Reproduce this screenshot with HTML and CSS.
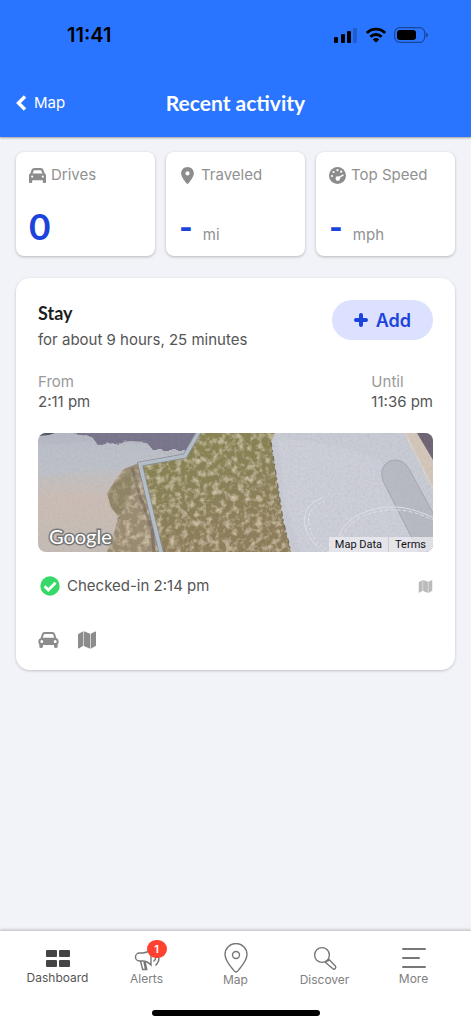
FILE: index.html
```html
<!DOCTYPE html>
<html lang="en">
<head>
    <meta charset="UTF-8">
    <meta name="viewport" content="width=device-width, initial-scale=1.0">
    <link rel="stylesheet" href="styles.css">
    <title>Recent activity</title>
</head>
<body>
    <svg class="defs" width="0" height="0" aria-hidden="true">
        <symbol id="icon-map" viewBox="0 0 20 20">
            <path d="M1 4.200 6.200 1.200v14.600l-4.400 2.600q-.8.3-.8-.6zM6.800 1.200l6.400 2.600v15l-6.400-2.800zM13.800 3.800l4.400-2.300q.8-.3.8.6v13.700l-5.200 3z"/>
        </symbol>
    </svg>

    <header class="header">
        <div class="status-bar">
            <span class="time">11:41</span>
            <div class="status-icons">
                <svg width="24" height="16" viewBox="0 0 24 16">
                    <rect x="0" y="10" width="4" height="6" rx="1"/>
                    <rect x="7" y="7" width="4" height="9" rx="1"/>
                    <rect x="13" y="4" width="4" height="12" rx="1"/>
                    <rect x="19" y="1" width="4" height="15" rx="1" opacity=".2"/>
                </svg>
                <svg width="22" height="16" viewBox="0 0 22 16">
                    <g fill="none" stroke="#000" stroke-width="2.8">
                        <path d="M1.800 6a13 13 0 0 1 18.400 0"/>
                        <path d="M5.400 9.800a8 8 0 0 1 11.200 0"/>
                    </g>
                    <path d="M11 15.600 7.800 12.400a4.600 4.600 0 0 1 6.400 0z"/>
                </svg>
                <svg width="34" height="16" viewBox="0 0 34 16">
                    <rect x=".7" y=".7" width="30" height="14.6" rx="5" fill="none" stroke="#000" stroke-width="1.2" opacity=".4"/>
                    <rect x="3" y="3" width="19" height="10" rx="3"/>
                    <path d="M32.200 5.500q1.600 1 1.600 2.500t-1.600 2.500z" opacity=".5"/>
                </svg>
            </div>
        </div>
        <div class="title-bar">
            <a class="back" href="#">
                <svg width="12" height="16" viewBox="0 0 12 16" fill="none" stroke="#fff" stroke-width="3.4"><path d="M10 1.500 3.500 8l6.500 6.500"/></svg>
                Map
            </a>
            <h1>Recent activity</h1>
        </div>
    </header>

    <main>
        <section class="stats">
            <div class="stat">
                <div class="stat-label">
                    <svg width="17" height="17" viewBox="0 0 512 512"><path d="M135.2 117.4L109.1 192H402.9l-26.1-74.6C372.3 104.6 360.2 96 346.6 96H165.4c-13.6 0-25.7 8.6-30.2 21.4zM39.6 196.8L74.8 96.3C88.3 57.8 124.6 32 165.4 32H346.6c40.8 0 77.1 25.8 90.6 64.3l35.2 100.5c23.2 9.6 39.6 32.5 39.6 59.2V400v48c0 17.7-14.3 32-32 32H448c-17.7 0-32-14.3-32-32V400H96v48c0 17.7-14.3 32-32 32H32c-17.7 0-32-14.3-32-32V400 256c0-26.7 16.4-49.6 39.6-59.2zM128 288a32 32 0 1 0 -64 0 32 32 0 1 0 64 0zm288 32a32 32 0 1 0 0-64 32 32 0 1 0 0 64z"/></svg>
                    Drives
                </div>
                <div class="stat-value"><strong>0</strong></div>
            </div>
            <div class="stat">
                <div class="stat-label">
                    <svg width="17" height="17" viewBox="0 0 512 512"><path transform="translate(64)" d="M215.7 499.2C267 435 384 279.4 384 192C384 86 298 0 192 0S0 86 0 192c0 87.4 117 243 168.3 307.2c12.3 15.3 35.1 15.3 47.4 0zM192 128a64 64 0 1 1 0 128 64 64 0 1 1 0-128z"/></svg>
                    Traveled
                </div>
                <div class="stat-value"><strong>-</strong><span>mi</span></div>
            </div>
            <div class="stat">
                <div class="stat-label">
                    <svg width="17" height="17" viewBox="0 0 17 17">
                        <circle cx="8.5" cy="8.5" r="8.5"/>
                        <g fill="#fff">
                            <circle cx="3" cy="9" r="1.1"/>
                            <circle cx="4.6" cy="5" r="1.1"/>
                            <circle cx="8.5" cy="3.2" r="1.1"/>
                            <circle cx="12.2" cy="4.7" r="1.1"/>
                            <circle cx="8.8" cy="11.6" r="2.3"/>
                        </g>
                        <path d="M8.800 11.200 14 8.200" stroke="#fff" stroke-width="1.5" stroke-linecap="round"/>
                    </svg>
                    Top Speed
                </div>
                <div class="stat-value"><strong>-</strong><span>mph</span></div>
            </div>
        </section>

        <section class="card">
            <div class="card-head">
                <div>
                    <h2>Stay</h2>
                    <p>for about 9 hours, 25 minutes</p>
                </div>
                <button type="button" class="add-button">
                    <svg width="14" height="14" viewBox="0 0 14 14" fill="none" stroke="#1c43dc" stroke-width="4" stroke-linecap="round"><path d="M7 2v10M2 7h10"/></svg>
                    Add
                </button>
            </div>

            <dl class="times">
                <div>
                    <dt>From</dt>
                    <dd>2:11 pm</dd>
                </div>
                <div>
                    <dt>Until</dt>
                    <dd>11:36 pm</dd>
                </div>
            </dl>

            <div class="map">
                <svg class="map-picture" viewBox="0 0 395 119" preserveAspectRatio="xMidYMid slice">
                    <defs>
                        <linearGradient id="lot" x1="0" y1="0" x2="0" y2="1">
                            <stop offset="0" stop-color="#b4b8c4"/>
                            <stop offset=".3" stop-color="#bfc0c4"/>
                            <stop offset=".55" stop-color="#cbbdb5"/>
                            <stop offset="1" stop-color="#c5bcb6"/>
                        </linearGradient>
                        <linearGradient id="grass" x1="0" y1="0" x2=".4" y2="1">
                            <stop offset="0" stop-color="#85834f"/>
                            <stop offset=".5" stop-color="#878052"/>
                            <stop offset="1" stop-color="#8d7c59"/>
                        </linearGradient>
                        <filter id="rough" x="0" y="0" width="1" height="1">
                            <feTurbulence type="fractalNoise" baseFrequency=".16" numOctaves="4" seed="4" result="n"/>
                            <feColorMatrix in="n" values="0 0 0 0 .76  0 0 0 0 .66  0 0 0 0 .48  1.800 0 0 0 -.8" result="spots"/>
                            <feComposite in="spots" in2="SourceGraphic" operator="in" result="s"/>
                            <feMerge><feMergeNode in="SourceGraphic"/><feMergeNode in="s"/></feMerge>
                        </filter>
                        <filter id="edge">
                            <feTurbulence type="fractalNoise" baseFrequency=".12" numOctaves="2" seed="2"/>
                            <feDisplacementMap in="SourceGraphic" scale="5"/>
                        </filter>
                        <filter id="grain" x="0" y="0" width="1" height="1">
                            <feTurbulence type="fractalNoise" baseFrequency=".4" numOctaves="2" seed="8"/>
                            <feColorMatrix values="0 0 0 0 .35  0 0 0 0 .33  0 0 0 0 .35  .4 0 0 0 -.16"/>
                        </filter>
                    </defs>
                    <rect width="395" height="119" fill="url(#lot)"/>
                    <path d="M0 12 55 8l55 4 20 12-45 12-40 2-45 8z" fill="#bcc2cc" opacity=".6"/>
                    <path filter="url(#edge)" d="M34-5h126l-12 22h-33l-7-8-16-1-32 4-6-8-18-3z" fill="#77738a"/>
                    <path d="M0 0h17l-6 2-11 1z" fill="#555363"/>
                    <g filter="url(#rough)">
                        <path d="M101 30 86 36 77 48l-8 12 4 14 7 9-3 14-8 22h55z" fill="#998970"/>
                        <path d="M160 0h77l-4 9 7 45 5 33 8 32H124L102 31l45-7z" fill="url(#grass)"/>
                    </g>
                    <path d="M88 38l-11 13-8 10 4 14 7 8 10-13 8-32z" fill="#7c794f" opacity=".4"/>
                    <path d="M94 35l8 28 12 34 2 22" fill="none" stroke="#5d5154" stroke-width="3" opacity=".4"/>
                    <path d="M237 0h158v119H253l-8-32-5-33-7-45z" fill="#c8cbd4"/>
                    <path d="M240 6q80 5 115 30l25 83H262l-15-50z" fill="#ced0da" opacity=".6"/>
                    <path d="m233 9 7 45 5 33 8 32" fill="none" stroke="#6d6952" stroke-width="1.2" stroke-dasharray="5 3 2 4"/>
                    <path d="M367 0h14l14 27v29z" fill="#d4c6b9"/>
                    <path d="M379 0h16v27z" fill="#6c6272"/>
                    <path d="m367 0 28 56" stroke="#d9d3d0" stroke-width="1.5"/>
                    <path d="m381 119-36-71c-7-20 17-29 26-12l30 55v28z" fill="#adb1ba" fill-opacity=".65" stroke="#a2a6b0"/>
                    <g fill="none" stroke="#e0e2e9">
                        <path d="M284 65c-14 4-19 16-17 27 3 14 11 21 22 29"/>
                        <path d="M287 68c-14 4-18 14-16 24 2 12 10 19 21 28" stroke-dasharray="3 2"/>
                        <path d="M301 104c4-16 23-28 49-30 18-1 33 5 46 11"/>
                        <path d="M304 105c4-15 22-26 46-28 17-1 31 3 45 10" stroke-dasharray="4 2"/>
                    </g>
                    <path d="M165-8 147 23 102 31l10 42 12 50" fill="none" stroke="#858a92" stroke-width="5"/>
                    <path d="M165-8 147 23 102 31l10 42 12 50" fill="none" stroke="#b5bfc9" stroke-width="3.5"/>
                    <rect width="395" height="119" filter="url(#grain)"/>
                </svg>
                <span class="map-logo">Google</span>
                <div class="map-links">
                    <a href="#">Map Data</a>
                    <a href="#">Terms</a>
                </div>
            </div>

            <div class="checkin">
                <svg width="20" height="20" viewBox="0 0 20 20">
                    <circle cx="10" cy="10" r="9.7" fill="#36d968"/>
                    <path d="m4.600 10.200 3.700 3.700 7.200-7.200" fill="none" stroke="#fff" stroke-width="2.8"/>
                </svg>
                <span>Checked-in 2:14 pm</span>
                <svg class="checkin-map" width="15" height="15"><use href="#icon-map"/></svg>
            </div>

            <div class="card-actions">
                <button type="button" aria-label="Drive">
                    <svg width="21" height="20" viewBox="0 0 21 20">
                        <path fill-rule="evenodd" d="M6.400 2h8.200q1.800 0 2.400 1.700L18.300 8q2.400.9 2.400 3.400 0 2-1 3.200v2q0 1.400-1.400 1.400h-.9q-1.400 0-1.400-1.400V15H5v1.600q0 1.400-1.400 1.400h-.9q-1.400 0-1.400-1.400v-2q-1-1.200-1-3.200Q.3 8.900 2.700 8L4 3.700Q4.600 2 6.400 2zm.4 1.900q-.7 0-1 .7L4.800 7.800h11.400l-1-3.200q-.3-.7-1-.7zM3.800 10a1.500 1.500 0 1 0 0 3 1.500 1.500 0 0 0 0-3zm13.400 0a1.500 1.500 0 1 0 0 3 1.500 1.500 0 0 0 0-3z"/>
                    </svg>
                </button>
                <button type="button" aria-label="Show on map">
                    <svg width="20" height="20"><use href="#icon-map"/></svg>
                </button>
            </div>
        </section>
    </main>

    <nav class="tabs">
        <a class="tab active" href="#">
            <svg width="30" height="28" viewBox="0 0 30 28">
                <rect x="3" y="7" width="11" height="7" rx="1"/>
                <rect x="16" y="7" width="11" height="7" rx="1"/>
                <rect x="3" y="17" width="11" height="7" rx="1"/>
                <rect x="16" y="17" width="11" height="7" rx="1"/>
            </svg>
            Dashboard
        </a>
        <a class="tab" href="#">
            <svg width="30" height="29" viewBox="0 0 30 29">
                <path d="M19 6.500q-4 3.500-8 3.500H7.500a3.500 3.500 0 0 0 0 8H11q4 0 8 4zM8.500 18l2.200 8.500h4L13 18.500M12 19l1.600 7.500M21.500 18.500q4.500-4 0-8.500M23.500 22.500q6-6 1.500-12.500"/>
            </svg>
            Alerts
            <span class="badge">1</span>
        </a>
        <a class="tab" href="#">
            <svg width="30" height="30" viewBox="0 0 30 30">
                <path d="M15 29q-1.500 0-3-2.500Q4 17 4 11.500a11 11 0 0 1 22 0q0 5.500-8 15Q16.500 29 15 29z"/>
                <circle cx="15" cy="12" r="3.5"/>
            </svg>
            Map
        </a>
        <a class="tab" href="#">
            <svg width="30" height="30" viewBox="0 0 30 30">
                <circle cx="12" cy="12" r="7.4"/>
                <path d="m15.500 19.500 3.300-3.300 6.500 6.800q1 1.300 0 2.500-1.300 1.300-2.600 0zM17.500 16.500l1.500 1.500"/>
            </svg>
            Discover
        </a>
        <a class="tab" href="#">
            <svg width="30" height="29" viewBox="0 0 30 29">
                <path class="menu-lines" d="M4 6h22M4 15h16M4 24h22"/>
            </svg>
            More
        </a>
        <span class="home-indicator"></span>
    </nav>
</body>
</html>
```

FILE: styles.css
```css
* {
    box-sizing: border-box;
}

body {
    display: flex;
    flex-direction: column;
    min-height: 100vh;
    margin: 0;
    background-color: #f2f3f8;
    color: #555;
    font-family: Inter, sans-serif;
    font-size: 15px;
    line-height: 20px;
}

h1, h2, p, dl, dd {
    margin: 0;
}

a {
    color: inherit;
    text-decoration: none;
}

button {
    border: none;
    padding: 0;
    background: none;
    font-family: inherit;
    cursor: pointer;
}

svg {
    display: block;
    flex-shrink: 0;
}

.defs {
    position: absolute;
}

.header {
    background-color: #2a75ff;
    box-shadow: 0 1px 2px rgba(0, 0, 0, 0.35);
}

.status-bar {
    display: flex;
    justify-content: space-between;
    align-items: center;
    height: 70px;
    padding: 0 43px 0 67px;
}

.time {
    color: #000;
    font-size: 20px;
    font-weight: 600;
}

.status-icons {
    display: flex;
    align-items: center;
    gap: 7px;
}

.title-bar {
    display: grid;
    grid-template-columns: 1fr auto 1fr;
    align-items: center;
    height: 66px;
    margin-bottom: 1px;
    padding: 0 15px;
    color: #fff;
}

.back {
    display: flex;
    align-items: center;
    gap: 7px;
}

h1 {
    font-family: Lato, sans-serif;
    font-size: 21px;
    font-weight: 700;
}

main {
    flex: 1;
    padding: 15px 16px;
}

.stats {
    display: grid;
    grid-template-columns: repeat(3, 1fr);
    gap: 11px;
    margin-bottom: 22px;
}

.stat {
    height: 104px;
    padding: 13px;
    border-radius: 8px;
    background-color: #fff;
    box-shadow: 0 1px 3px rgba(0, 0, 0, 0.25);
}

.stat-label {
    display: flex;
    align-items: center;
    gap: 5px;
    color: #919191;
    fill: #8c8c8c;
    white-space: nowrap;
}

.stat-value {
    display: flex;
    align-items: baseline;
    gap: 10px;
    margin-top: 19px;
    color: #919191;
}

.stat-value strong {
    color: #1c43dc;
    font-family: Lato, sans-serif;
    font-size: 37px;
    line-height: 44px;
}

.card {
    padding: 22px 22px 20px;
    border-radius: 14px;
    background-color: #fff;
    box-shadow: 0 1px 3px rgba(0, 0, 0, 0.2);
}

.card-head {
    display: flex;
    justify-content: space-between;
    align-items: flex-start;
    margin-bottom: 18px;
}

h2 {
    color: #1e1e1e;
    font-family: Lato, sans-serif;
    font-size: 18px;
    font-weight: 700;
    line-height: 26px;
}

.card-head p {
    line-height: 28px;
}

.add-button {
    display: flex;
    align-items: center;
    gap: 8px;
    height: 40px;
    padding: 0 22px;
    border-radius: 20px;
    background-color: #dbe1ff;
    color: #1c43dc;
    font-size: 18px;
    font-weight: 600;
}

.times {
    display: flex;
    justify-content: space-between;
    margin-bottom: 21px;
}

.times dt {
    color: #999;
}

.map {
    position: relative;
    height: 119px;
    border-radius: 8px;
    overflow: hidden;
}

.map-picture {
    width: 100%;
    height: 100%;
}

.map-logo {
    position: absolute;
    left: 11px;
    bottom: 5px;
    color: #fff;
    font-family: Lato, sans-serif;
    font-size: 20px;
    line-height: 22px;
    -webkit-text-stroke: 3px #777;
    paint-order: stroke fill;
}

.map-links {
    position: absolute;
    right: 0;
    bottom: 0;
    display: flex;
    background-color: rgba(240, 240, 243, 0.7);
    color: #111;
    font-family: Roboto, sans-serif;
    font-size: 11px;
    line-height: 15px;
}

.map-links a {
    padding: 0 6px;
}

.map-links a + a {
    padding-right: 7px;
    border-left: 1px solid #ccc;
}

.checkin {
    display: flex;
    align-items: center;
    gap: 7px;
    height: 24px;
    margin: 22px 0 32px;
    padding-left: 2px;
}

.checkin-map {
    margin-left: auto;
    fill: #bbb;
}

.card-actions {
    display: flex;
    gap: 18px;
    fill: #8c8c8c;
}

.tabs {
    position: relative;
    display: grid;
    grid-template-columns: repeat(5, 1fr);
    height: 93px;
    padding: 12px 13px 0;
    background-color: #fff;
    box-shadow: 0 -1px 3px rgba(0, 0, 0, 0.25);
}

.tab {
    position: relative;
    display: flex;
    flex-direction: column;
    align-items: center;
    color: #808080;
    font-size: 12px;
    line-height: 14px;
    fill: none;
    stroke: #777;
    stroke-width: 1.4px;
}

.tab.active {
    color: #555;
    fill: #444;
    stroke: none;
}

.menu-lines {
    stroke-width: 2px;
    stroke-linecap: round;
}

.badge {
    position: absolute;
    top: -3px;
    left: 50%;
    width: 20px;
    border-radius: 9px;
    background-color: #ff4130;
    color: #fff;
    font-size: 11px;
    font-weight: 600;
    line-height: 18px;
    text-align: center;
}

.home-indicator {
    position: absolute;
    left: 50%;
    bottom: 8px;
    width: 168px;
    height: 6px;
    margin-left: -84px;
    border-radius: 3px;
    background-color: #000;
}
```
